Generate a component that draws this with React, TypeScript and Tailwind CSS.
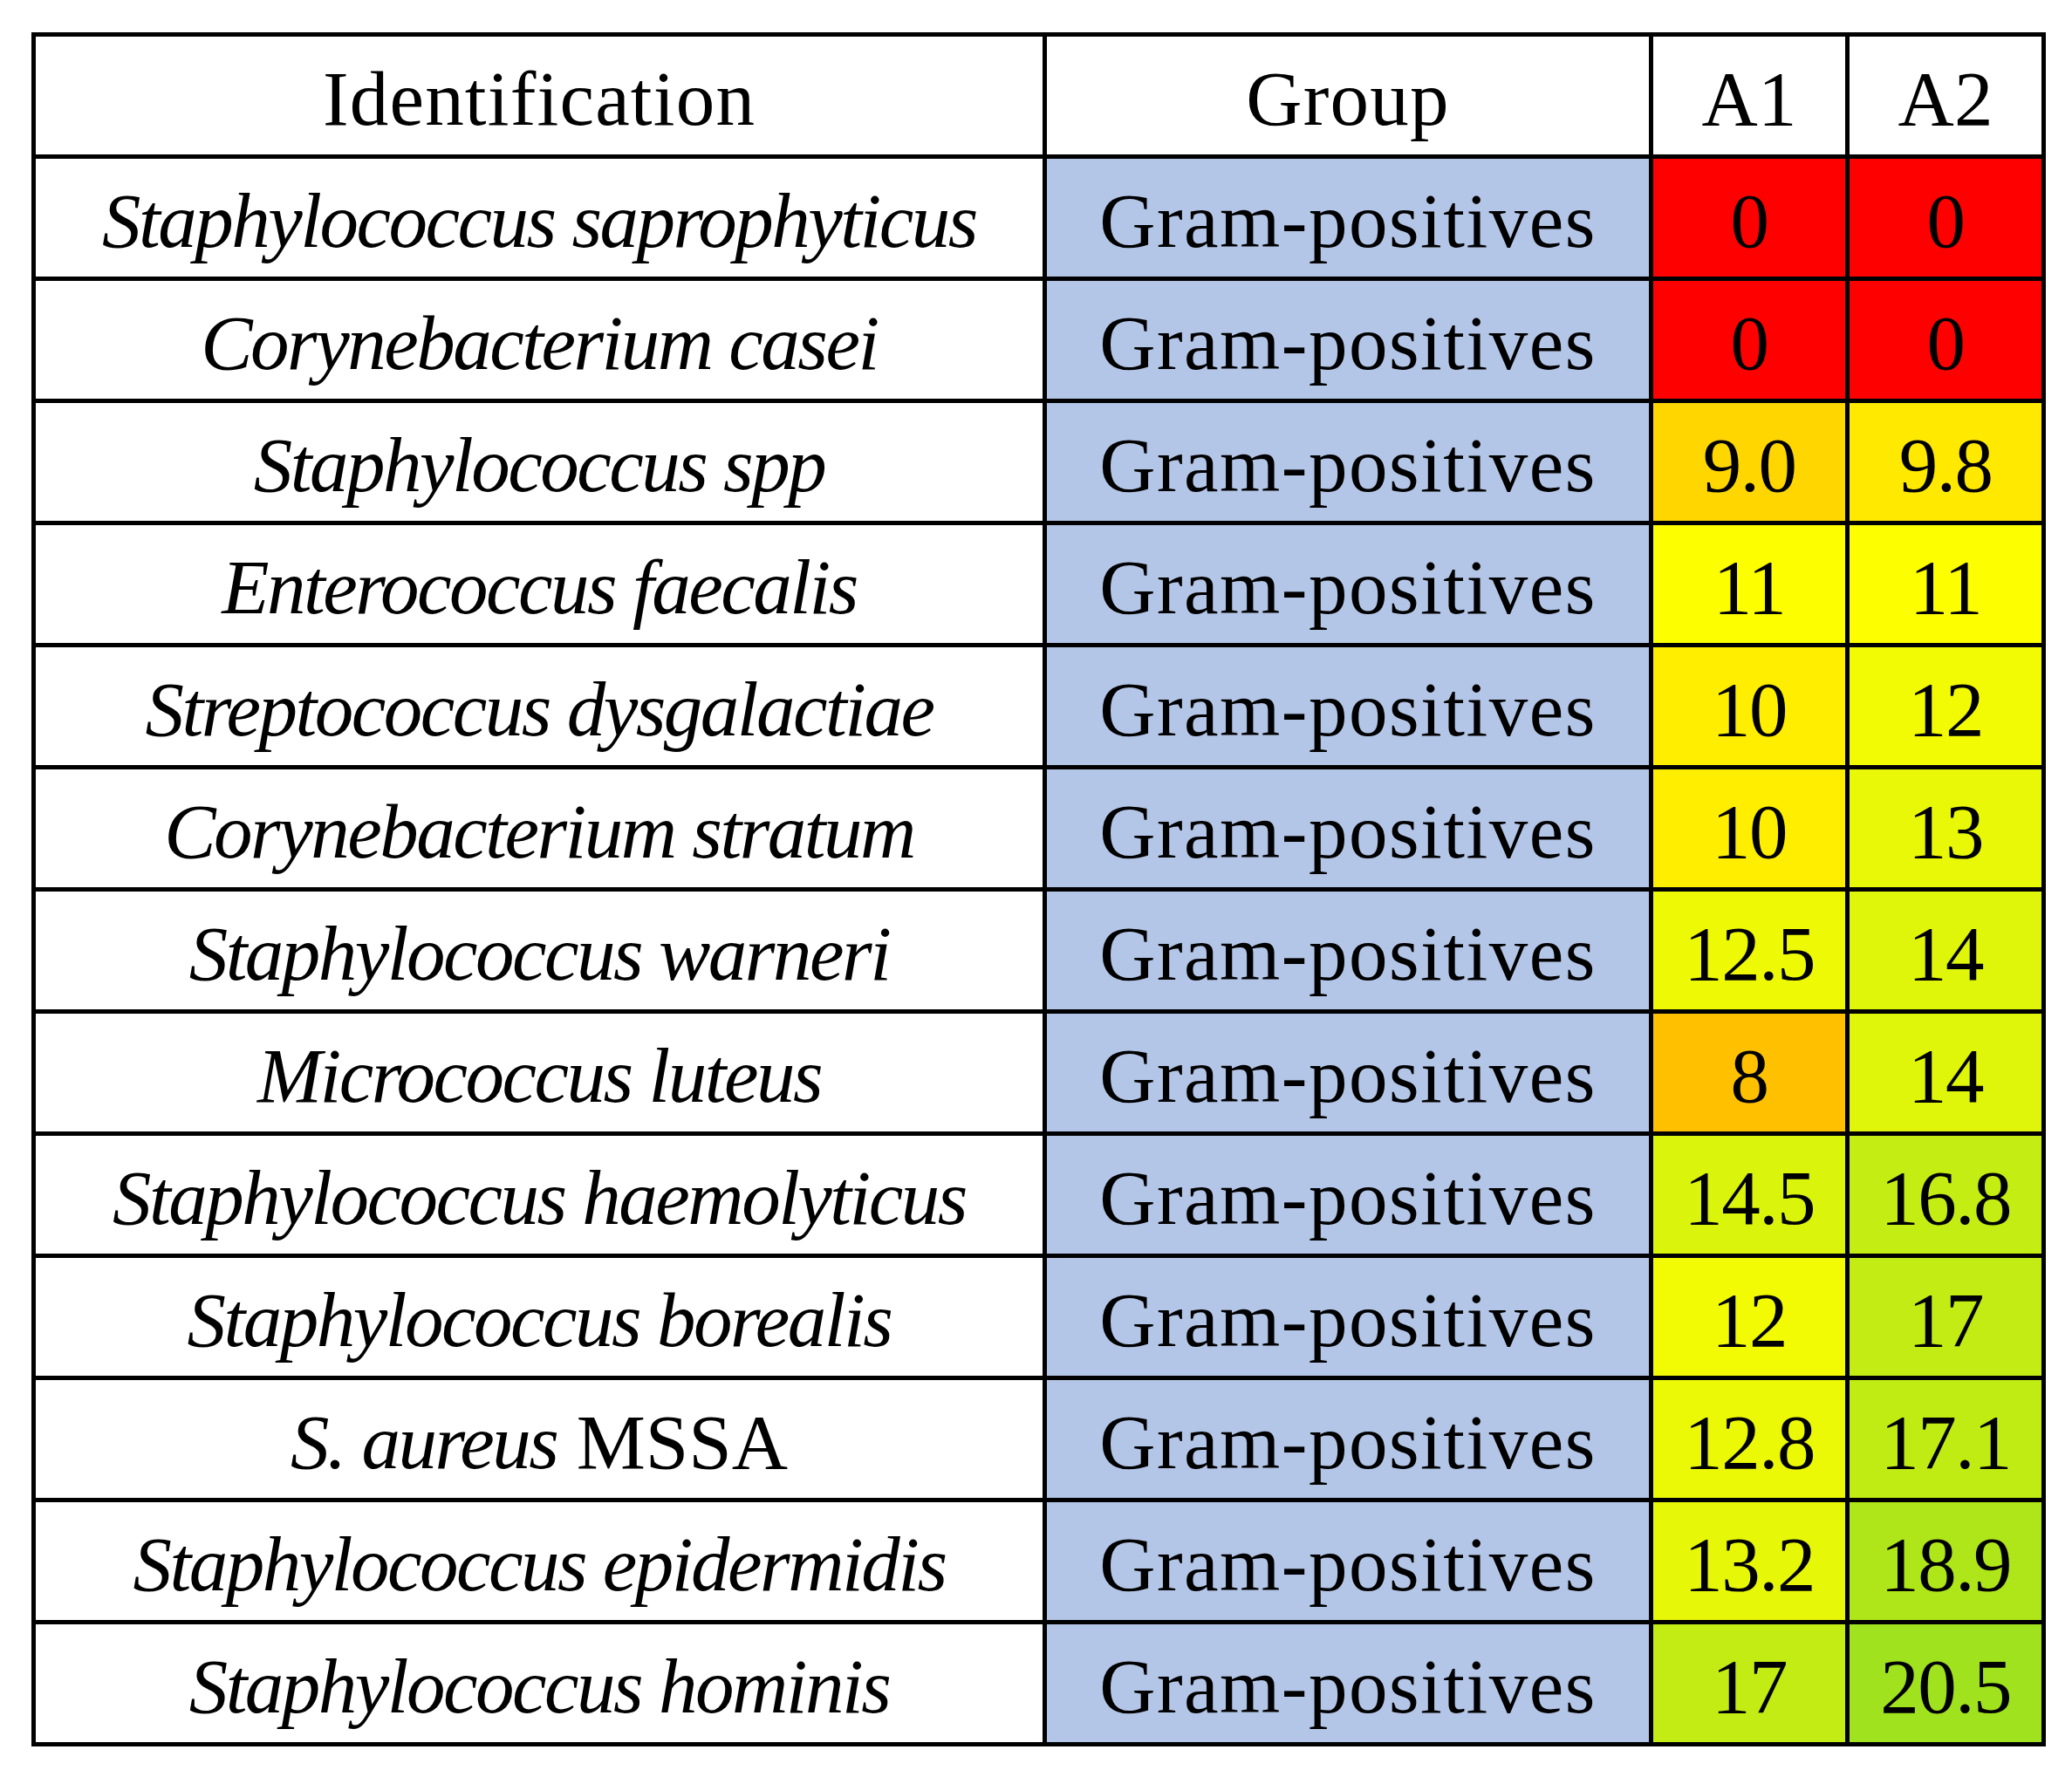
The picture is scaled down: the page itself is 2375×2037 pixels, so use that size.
import React from "react";

type Row = {
  name: React.ReactNode;
  a1: string;
  a1c: string;
  a2: string;
  a2c: string;
};

const rows: Row[] = [
  { name: <i>Staphylococcus saprophyticus</i>, a1: "0", a1c: "bg-[#ff0000]", a2: "0", a2c: "bg-[#ff0000]" },
  { name: <i>Corynebacterium casei</i>, a1: "0", a1c: "bg-[#ff0000]", a2: "0", a2c: "bg-[#ff0000]" },
  { name: <i>Staphylococcus spp</i>, a1: "9.0", a1c: "bg-[#ffd600]", a2: "9.8", a2c: "bg-[#ffe900]" },
  { name: <i>Enterococcus faecalis</i>, a1: "11", a1c: "bg-[#fdfe00]", a2: "11", a2c: "bg-[#fdfe00]" },
  { name: <i>Streptococcus dysgalactiae</i>, a1: "10", a1c: "bg-[#ffee00]", a2: "12", a2c: "bg-[#f2fb04]" },
  { name: <i>Corynebacterium stratum</i>, a1: "10", a1c: "bg-[#ffee00]", a2: "13", a2c: "bg-[#e9f807]" },
  { name: <i>Staphylococcus warneri</i>, a1: "12.5", a1c: "bg-[#eefa05]", a2: "14", a2c: "bg-[#dff50a]" },
  { name: <i>Micrococcus luteus</i>, a1: "8", a1c: "bg-[#ffc000]", a2: "14", a2c: "bg-[#dff50a]" },
  { name: <i>Staphylococcus haemolyticus</i>, a1: "14.5", a1c: "bg-[#daf40c]", a2: "16.8", a2c: "bg-[#c4ed13]" },
  { name: <i>Staphylococcus borealis</i>, a1: "12", a1c: "bg-[#f2fb04]", a2: "17", a2c: "bg-[#c2ec13]" },
  {
    name: (
      <>
        <i>S. aureus</i>
        <span className="tracking-normal"> MSSA</span>
      </>
    ),
    a1: "12.8",
    a1c: "bg-[#ebf906]",
    a2: "17.1",
    a2c: "bg-[#c1ec13]",
  },
  { name: <i>Staphylococcus epidermidis</i>, a1: "13.2", a1c: "bg-[#e7f708]", a2: "18.9", a2c: "bg-[#afe619]" },
  { name: <i>Staphylococcus hominis</i>, a1: "17", a1c: "bg-[#c2ec13]", a2: "20.5", a2c: "bg-[#a0e21e]" },
];

const cell = "pt-[27px] text-center leading-[89px] whitespace-nowrap";

export default function App() {
  return (
    <div
      className="min-h-[2037px] w-[2375px] bg-white pl-[36px] pt-[37px] text-black text-[89px]"
      style={{ fontFamily: '"Liberation Serif", "Times New Roman", serif' }}
    >
      <div className="grid w-[2309px] grid-cols-[1154px_690px_220px_220px] auto-rows-[135px] gap-[5px] bg-black p-[5px]">
        <div className={`bg-white ${cell} tracking-[1.2px]`}>Identification</div>
        <div className={`bg-white ${cell} tracking-[1.2px]`}>Group</div>
        <div className={`bg-white ${cell}`}>A1</div>
        <div className={`bg-white ${cell}`}>A2</div>
        {rows.map((r, i) => (
          <React.Fragment key={i}>
            <div className={`bg-white ${cell} tracking-[-2.5px]`}>{r.name}</div>
            <div className={`bg-[#b4c6e7] ${cell} tracking-[1.5px]`}>Gram-positives</div>
            <div className={`${r.a1c} ${cell} tracking-[-1.5px]`}>{r.a1}</div>
            <div className={`${r.a2c} ${cell} tracking-[-1.5px]`}>{r.a2}</div>
          </React.Fragment>
        ))}
      </div>
    </div>
  );
}
